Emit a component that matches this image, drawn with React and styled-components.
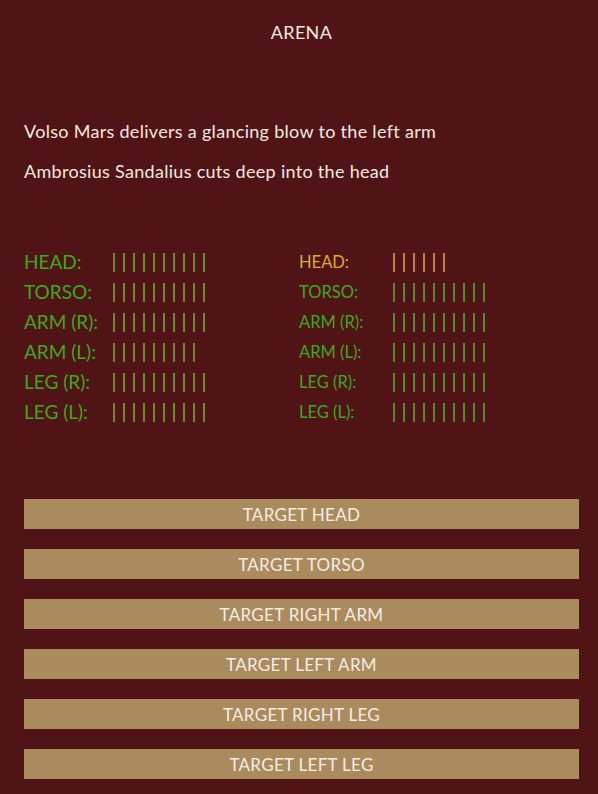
import React from "react";
import styled, { createGlobalStyle } from "styled-components";

const GlobalStyle = createGlobalStyle`
  body {
    margin: 0;
    background-color: #511416;
    font-family: "Lato", "Open Sans", sans-serif;
    color: #f3e9df;
  }
`;

const ArenaPage = styled.div`
  width: 598px;
  min-height: 794px;
  box-sizing: border-box;
  padding: 20px 19px 0 24px;
  display: flex;
  flex-direction: column;
`;

const Title = styled.h1`
  margin: 0;
  font-size: 18px;
  font-weight: 400;
  line-height: 24px;
  text-align: center;
  letter-spacing: 0.3px;
`;

const CombatLog = styled.div`
  margin-top: 75px;
  display: flex;
  flex-direction: column;
  gap: 16px;
`;

const LogLine = styled.p`
  margin: 0;
  font-size: 18px;
  line-height: 24px;
  letter-spacing: 0.3px;
`;

const StatusGrid = styled.div`
  margin-top: 64px;
  display: grid;
  grid-template-columns: 275px 1fr;
`;

const Fighter = styled.div`
  display: flex;
  flex-direction: column;
`;

const PartRow = styled.div`
  height: 30px;
  display: flex;
  align-items: center;
  color: ${(p) => (p.$hurt ? "#d9ad36" : "#3ea81f")};
`;

const PartLabel = styled.span`
  width: ${(p) => (p.$big ? "89px" : "94px")};
  font-size: ${(p) => (p.$big ? "19px" : "16.5px")};
  line-height: 30px;
  white-space: nowrap;
`;

const Meter = styled.div`
  display: flex;
  gap: 8px;
`;

// one tick per remaining hit point
const Tick = styled.span`
  display: block;
  width: 2px;
  height: 19px;
  background-color: ${(p) =>
    p.$hurt ? "#bf8138" : p.$big ? "#6f8a22" : "#528c24"};
`;

const Actions = styled.div`
  margin-top: 72px;
  margin-bottom: 15px;
  display: flex;
  flex-direction: column;
  gap: 20px;
`;

const TargetButton = styled.button`
  height: 30px;
  width: 555px;
  border: none;
  padding: 0;
  background-color: #a98b5d;
  color: #f6ede2;
  font-family: "Lato", "Open Sans", sans-serif;
  font-size: 17px;
  letter-spacing: 0.3px;
  cursor: pointer;

  &:hover {
    background-color: #b89a6a;
  }
`;

const leftFighter = [
  ["HEAD:", 10],
  ["TORSO:", 10],
  ["ARM (R):", 10],
  ["ARM (L):", 9],
  ["LEG (R):", 10],
  ["LEG (L):", 10],
];

const rightFighter = [
  ["HEAD:", 6, true],
  ["TORSO:", 10],
  ["ARM (R):", 10],
  ["ARM (L):", 10],
  ["LEG (R):", 10],
  ["LEG (L):", 10],
];

const targets = [
  "TARGET HEAD",
  "TARGET TORSO",
  "TARGET RIGHT ARM",
  "TARGET LEFT ARM",
  "TARGET RIGHT LEG",
  "TARGET LEFT LEG",
];

const FighterStatus = ({ parts, big }) => (
  <Fighter>
    {parts.map(([label, hp, hurt]) => (
      <PartRow key={label} $hurt={hurt}>
        <PartLabel $big={big}>{label}</PartLabel>
        <Meter>
          {Array.from({ length: hp }).map((_, i) => (
            <Tick key={i} $big={big} $hurt={hurt} />
          ))}
        </Meter>
      </PartRow>
    ))}
  </Fighter>
);

const App = () => {
  return (
    <>
      <GlobalStyle />
      <ArenaPage>
        <Title>ARENA</Title>
        <CombatLog>
          <LogLine>Volso Mars delivers a glancing blow to the left arm</LogLine>
          <LogLine>Ambrosius Sandalius cuts deep into the head</LogLine>
        </CombatLog>
        <StatusGrid>
          <FighterStatus parts={leftFighter} big />
          <FighterStatus parts={rightFighter} />
        </StatusGrid>
        <Actions>
          {targets.map((t) => (
            <TargetButton key={t}>{t}</TargetButton>
          ))}
        </Actions>
      </ArenaPage>
    </>
  );
};

export default App;
